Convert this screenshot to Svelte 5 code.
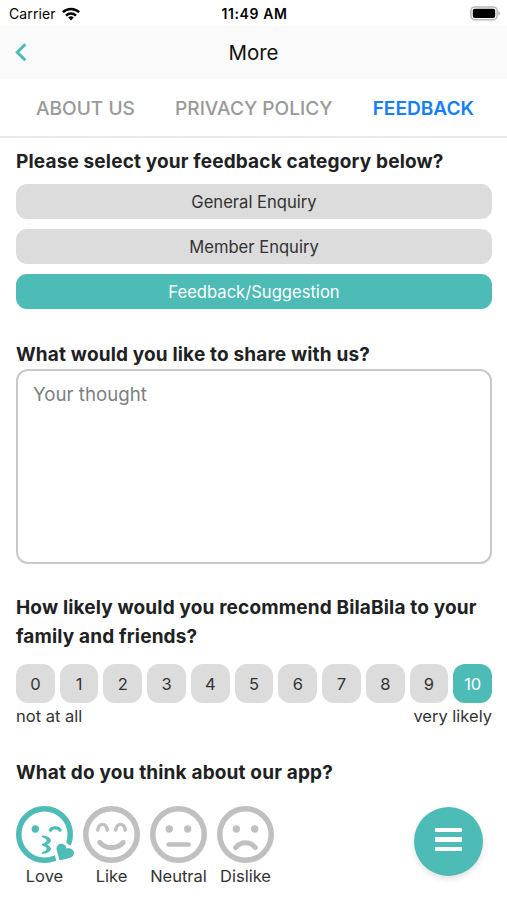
<script lang="ts">
    const tabs = ["ABOUT US", "PRIVACY POLICY", "FEEDBACK"];
    const categories = ["General Enquiry", "Member Enquiry", "Feedback/Suggestion"];
    const moods = ["Love", "Like", "Neutral", "Dislike"];

    let tab = $state("FEEDBACK");
    let category = $state("Feedback/Suggestion");
    let thought = $state("");
    let score = $state(10);
    let mood = $state("Love");
</script>

<div class="screen">
    <div class="status">
        <div class="carrier">
            <span>Carrier</span>
            <svg width="18" height="14" viewBox="0 0 18 14">
                <g fill="none" stroke="#000" stroke-width="2.5">
                    <path d="M0.9 5.2a11.6 11.6 0 0 1 16.2 0" />
                    <path d="M4 8.6a7.2 7.2 0 0 1 10 0" />
                </g>
                <path d="M6.2 10.6a4.1 4.1 0 0 1 5.6 0L9 13.6z" />
            </svg>
        </div>
        <div class="time">11:49 AM</div>
        <div class="battery">
            <svg width="31" height="15" viewBox="0 0 31 15">
                <rect x="1.9" y="0.9" width="26.2" height="12.8" rx="3.8" fill="#fff" stroke="#b9b9b9" stroke-width="1.5" />
                <rect x="3.8" y="2.7" width="22.4" height="9.2" rx="2" />
                <path d="M29.3 5v4.6c2.2-.8 2.2-3.8 0-4.6z" fill="#b0b0b0" />
            </svg>
        </div>
    </div>

    <header>
        <button class="back" aria-label="Back">
            <svg width="12" height="20" viewBox="0 0 12 20">
                <path d="M10.3 1.2 2.3 9.2l8 8" fill="none" stroke="#4dbbb6" stroke-width="3" />
            </svg>
        </button>
        <h1>More</h1>
    </header>

    <nav>
        {#each tabs as name}
            <button class:active={tab === name} onclick={() => (tab = name)}>{name}</button>
        {/each}
    </nav>

    <main>
        <h2>Please select your feedback category below?</h2>
        <div class="categories">
            {#each categories as name}
                <button class:active={category === name} onclick={() => (category = name)}>{name}</button>
            {/each}
        </div>

        <h2 class="share">What would you like to share with us?</h2>
        <textarea placeholder="Your thought" bind:value={thought}></textarea>

        <h2 class="recommend">How likely would you recommend BilaBila to your family and friends?</h2>
        <div class="scores">
            {#each { length: 11 } as _, i}
                <button class:active={score === i} onclick={() => (score = i)}>{i}</button>
            {/each}
        </div>
        <div class="legend">
            <span>not at all</span>
            <span>very likely</span>
        </div>

        <h2 class="think">What do you think about our app?</h2>
        <div class="moods">
            {#each moods as name}
                <button class:active={mood === name} onclick={() => (mood = name)}>
                    <svg viewBox="0 8 496 496">
                        <circle class="line" cx="248" cy="256" r="224" stroke-width="48" />
                        {#if name === "Like"}
                            <path class="line" stroke-width="30" d="M128 218c5-28 22-50 42-50s37 22 42 50M284 218c5-28 22-50 42-50s37 22 42 50" />
                            <path class="line" stroke-width="44" d="M146 324c26 30 62 46 102 46s76-16 102-46" />
                        {:else}
                            <circle cx="168" cy="208" r="32" />
                        {/if}
                        {#if name === "Neutral" || name === "Dislike"}
                            <circle cx="328" cy="208" r="32" />
                        {/if}
                        {#if name === "Neutral"}
                            <path class="line" stroke-width="40" d="M162 343h174" />
                        {:else if name === "Dislike"}
                            <path class="line" stroke-width="42" d="M162 370c22-27 52-42 86-42s64 15 86 42" />
                        {:else if name === "Love"}
                            <path class="line" stroke-width="29" d="M299 218c14-27 70-27 84 0" />
                            <path d="M304 308.5c0-19.2-28.8-41.5-71.5-44-3.8-.4-7.4 2.4-8.2 6.2-.9 3.8 1.1 7.7 4.7 9.2l16.9 7.2c13 5.5 20.8 13.5 20.8 21.5s-7.8 16-20.7 21.5l-17 7.2c-5.7 2.4-6 12.2 0 14.8l16.9 7.2c13 5.5 20.8 13.5 20.8 21.5s-7.8 16-20.7 21.5l-17 7.2c-3.6 1.5-5.6 5.4-4.7 9.2.8 3.6 4.1 6.2 7.8 6.2h.5c42.8-2.5 71.5-24.8 71.5-44 0-13-13.4-27.3-35.2-36 21.7-9.1 35.1-23.4 35.1-36.4z" />
                            <path class="heart" d="M501.1 402.5c-8-20.8-31.5-31.5-53.1-25.9l-8.4 2.2-2.3-8.4c-5.9-21.4-27-36.5-49-33-25.2 4-40.6 28.6-34 52.6l22.9 82.6c1.5 5.3 7 8.5 12.4 7.1l83-21.5c24.1-6.3 37.7-31.8 28.5-55.7z" />
                        {/if}
                    </svg>
                    <span>{name}</span>
                </button>
            {/each}
        </div>
    </main>

    <button class="menu" aria-label="Menu">
        <i></i>
        <i></i>
        <i></i>
    </button>
</div>

<style>
    :global(body) {
        margin: 0;
        background: #fff;
    }

    .screen {
        position: relative;
        width: 507px;
        height: 900px;
        overflow: hidden;
        background: #fff;
        color: #202122;
        font-family: Inter, "Liberation Sans", sans-serif;
    }

    button {
        border: 0;
        padding: 0;
        background: none;
        color: inherit;
        font: inherit;
        cursor: pointer;
    }

    svg {
        display: block;
        overflow: visible;
    }

    .status {
        display: grid;
        grid-template-columns: 1fr auto 1fr;
        align-items: center;
        box-sizing: border-box;
        height: 26px;
        padding: 1px 7px 0 9px;
        color: #000;
        font-size: 14px;
    }

    .carrier {
        display: flex;
        align-items: center;
        gap: 6px;
        letter-spacing: 0.1px;
    }

    .time {
        font-weight: 600;
        letter-spacing: 0.6px;
    }

    .battery {
        display: flex;
        justify-content: flex-end;
    }

    header {
        display: grid;
        grid-template-columns: 1fr auto 1fr;
        align-items: center;
        height: 53px;
        background: #fafafa;
    }

    .back {
        width: 12px;
        margin-left: 15px;
    }

    h1 {
        margin: 0;
        color: #111;
        font-size: 20.5px;
        font-weight: 400;
    }

    nav {
        display: flex;
        justify-content: space-between;
        height: 57px;
        padding: 0 33px 0 36px;
        border-bottom: 2px solid #e9e9e9;
    }

    nav button {
        color: #999;
        font-size: 19.1px;
        font-weight: 500;
    }

    nav .active {
        color: #147efb;
        font-weight: 600;
    }

    main {
        padding: 9px 15px 0 16px;
    }

    h2 {
        margin: 0;
        font-size: 19px;
        font-weight: 700;
        letter-spacing: 0.16px;
        line-height: 29px;
    }

    .categories {
        display: flex;
        flex-direction: column;
        gap: 10px;
        margin-top: 8px;
    }

    .categories button {
        height: 35px;
        border-radius: 11px;
        background: #dcdcdc;
        color: #333;
        font-size: 16.6px;
    }

    .categories .active,
    .scores .active {
        background: #4dbbb6;
        color: #fff;
    }

    .share {
        margin-top: 31px;
    }

    textarea {
        display: block;
        box-sizing: border-box;
        width: 100%;
        height: 195px;
        padding: 11px 15px;
        border: 2px solid #c9c9c9;
        border-radius: 12px;
        outline: none;
        resize: none;
        font: 18.7px/26px Inter, "Liberation Sans", sans-serif;
    }

    textarea::placeholder {
        color: #7b8084;
    }

    .recommend {
        margin-top: 29px;
    }

    .scores {
        display: flex;
        gap: 5px;
        margin-top: 13px;
    }

    .scores button {
        flex: 1;
        height: 39px;
        border-radius: 12px;
        background: #dcdcdc;
        color: #333;
        font-size: 16.5px;
    }

    .legend {
        display: flex;
        justify-content: space-between;
        color: #333;
        font-size: 16.5px;
        line-height: 26px;
    }

    .think {
        margin-top: 29px;
    }

    .moods {
        display: flex;
        gap: 10px;
        margin-top: 19px;
    }

    .moods button {
        display: flex;
        flex-direction: column;
        align-items: center;
        width: 57px;
    }

    .moods svg {
        width: 57px;
        height: 57px;
        color: #c0c0c0;
        fill: currentColor;
    }

    .moods .active svg {
        color: #4dbbb6;
    }

    .moods span {
        color: #333;
        font-size: 16.5px;
        line-height: 26px;
        white-space: nowrap;
    }

    .line {
        fill: none;
        stroke: currentColor;
        stroke-linecap: round;
    }

    .heart {
        stroke: #fff;
        stroke-width: 56;
        paint-order: stroke;
    }

    /* floating over the form */
    .menu {
        position: absolute;
        right: 24px;
        bottom: 24px;
        display: flex;
        flex-direction: column;
        align-items: center;
        justify-content: center;
        gap: 5px;
        width: 69px;
        height: 69px;
        padding-bottom: 4px;
        border-radius: 50%;
        background: #4dbbb6;
        box-shadow: 0 3px 6px rgba(0, 0, 0, 0.12);
    }

    .menu i {
        width: 27px;
        height: 4.5px;
        border-radius: 1px;
        background: #fff;
    }
</style>
